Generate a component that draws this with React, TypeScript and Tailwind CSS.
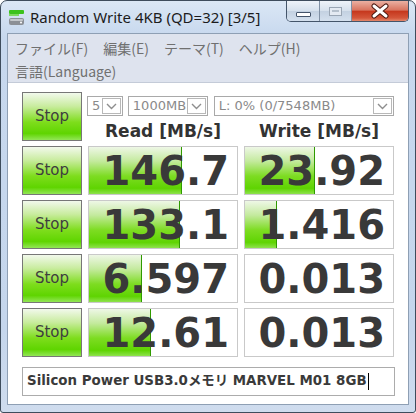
const rows = [
  { read: "146.7", rb: 94, write: "23.92", wb: 71 },
  { read: "133.1", rb: 92, write: "1.416", wb: 33 },
  { read: "6.597", rb: 54, write: "0.013", wb: 0 },
  { read: "12.61", rb: 63, write: "0.013", wb: 0 },
];

const barBg =
  "bg-[linear-gradient(to_bottom,#eef7e6_0%,#c4ea9e_30%,#7ddc22_62%,#5fd402_88%,#8ee24c_100%)]";

function Chevron() {
  return (
    <svg width="11" height="7" viewBox="0 0 11 7">
      <path d="M1 1l4.5 4.5L10 1" fill="none" stroke="#8e8e8e" strokeWidth="1.4" />
    </svg>
  );
}

function Combo({ className, text }: { className: string; text: string }) {
  return (
    <div className={`${className} h-[20px] flex border border-[#a9a9a9] bg-white`}>
      <span className="flex-1 pl-[4px] leading-[18px] text-[13px] text-[#8a8a8a] font-['DejaVu_Sans',sans-serif] whitespace-nowrap overflow-hidden">
        {text}
      </span>
      <span className="w-[19px] m-px flex items-center justify-center border border-[#b8b8b8]">
        <Chevron />
      </span>
    </div>
  );
}

function StopButton() {
  return (
    <button className="w-[60px] h-[49px] flex items-center justify-center border border-[#777] bg-[linear-gradient(to_bottom,#f2f9ec_0%,#c9ec9f_28%,#7edd1c_62%,#5fd500_86%,#92e656_100%)] text-[15px] text-[#3e3e3e] font-['DejaVu_Sans',sans-serif]">
      Stop
    </button>
  );
}

function Cell({ value, bar }: { value: string; bar: number }) {
  return (
    <div className="relative w-[150px] h-[49px] border border-[#c9c9c9] bg-white flex items-center justify-end pr-[8px]">
      {bar > 0 && (
        <div
          className={`absolute left-0 top-0 bottom-0 border-r border-[#2f9a00] ${barBg}`}
          style={{ width: bar - 1 }}
        />
      )}
      <span className="relative text-[40px] leading-none font-bold text-[#393939] font-['DejaVu_Sans',sans-serif]">
        {value}
      </span>
    </div>
  );
}

function WindowButtons() {
  return (
    <div className="self-start mr-[6px] flex h-[21px] border border-t-0 border-[#44556a] rounded-b-[5px] overflow-hidden">
      <div className="w-[33px] flex items-center justify-center border-r border-[#8090a4] bg-[linear-gradient(to_bottom,#eef3f9,#d5e0ec_50%,#c3d1e1_51%,#d4e0ee)]">
        <div className="mt-[6px] w-[15px] h-[5px] bg-white border border-[#44546a] rounded-[1px]" />
      </div>
      <div className="w-[32px] flex items-center justify-center border-r border-[#8090a4] bg-[linear-gradient(to_bottom,#eef3f9,#d5e0ec_50%,#c3d1e1_51%,#d4e0ee)]">
        <div className="w-[13px] h-[9px] border border-[#9aa6b4] bg-[#e4eaf2] flex items-start justify-center pt-[2px]">
          <div className="w-[7px] h-[2px] bg-[#b5c0cc]" />
        </div>
      </div>
      <div className="w-[56px] flex items-center justify-center bg-[linear-gradient(to_bottom,#eab0a2,#d87560_45%,#c6381e_52%,#d4563a_85%,#e3886c)]">
        <svg width="20" height="16" viewBox="0 0 20 16">
          <path d="M4 3l12 10M16 3L4 13" stroke="#4a1810" strokeWidth="5" strokeLinecap="round" />
          <path d="M4 3l12 10M16 3L4 13" stroke="#ffffff" strokeWidth="3" strokeLinecap="round" />
        </svg>
      </div>
    </div>
  );
}

function AppIcon() {
  return (
    <svg width="17" height="17" viewBox="0 0 17 17">
      <rect x="1" y="1" width="15" height="4" rx="1" fill="#3cc21c" />
      <rect x="1" y="5" width="10" height="2" fill="#7fd860" />
      <rect x="1" y="9" width="15" height="7" rx="2" fill="#8c9096" />
      <rect x="2" y="10" width="13" height="2" rx="1" fill="#c4c8cc" />
      <circle cx="13" cy="13.5" r="1" fill="#ffffff" />
    </svg>
  );
}

export default function App() {
  return (
    <div className="w-[416px] h-[413px] flex flex-col border border-[#3e4c5c] rounded-t-[7px] rounded-b-[3px] overflow-hidden bg-[linear-gradient(to_bottom,#dbe7f5,#c7d8ee_36px,#c5d6ec_80%,#cfdcee)]">
      <div className="h-[32px] flex shrink-0">
        <div className="flex items-center pl-[7px] gap-[5px]">
          <AppIcon />
          <span className="text-[15px] text-[#1c1c1c] font-['Noto_Sans',sans-serif] whitespace-nowrap">
            Random Write 4KB (QD=32) [3/5]
          </span>
        </div>
        <div className="ml-auto" />
        <WindowButtons />
      </div>

      <div className="mx-[6px] mb-[7px] flex-1 flex flex-col border border-[#8e9fb4] bg-white">
        <div className="h-[49px] pt-[2px] bg-[#dee3ee] border-b border-[#c4cbd8] text-[14px] text-[#707070] font-['Noto_Sans_CJK_JP',sans-serif]">
          <div className="h-[24px] flex items-center">
            <span className="px-[7px]">ファイル(F)</span>
            <span className="px-[7px] ml-px">編集(E)</span>
            <span className="px-[7px] ml-px">テーマ(T)</span>
            <span className="px-[7px] ml-px">ヘルプ(H)</span>
          </div>
          <div className="h-[23px] flex items-center">
            <span className="px-[7px]">言語(Language)</span>
          </div>
        </div>

        <div className="flex-1 pt-[9px] pl-[14px] flex flex-col">
          <div className="grid grid-cols-[60px_150px_150px] gap-x-[6px] gap-y-[5px]">
            <StopButton />
            <div className="col-span-2 h-[49px] flex flex-col">
              <div className="flex gap-[5px] mt-[4px] -ml-px">
                <Combo className="w-[36px]" text="5" />
                <Combo className="w-[80px]" text="1000MB" />
                <Combo className="w-[181px] ml-px" text="L: 0% (0/7548MB)" />
              </div>
              <div className="flex-1 pt-[3px] grid grid-cols-[150px_150px] gap-x-[6px] items-center text-[17px] font-bold text-[#333] font-['DejaVu_Sans',sans-serif] text-center">
                <span>Read [MB/s]</span>
                <span>Write [MB/s]</span>
              </div>
            </div>
            {rows.map((r, i) => (
              <div key={i} className="contents">
                <StopButton />
                <Cell value={r.read} bar={r.rb} />
                <Cell value={r.write} bar={r.wb} />
              </div>
            ))}
          </div>
          <div className="mt-[10px] w-[373px] h-[29px] border border-[#acacac] flex items-center pl-[4px] text-[13.4px] font-bold text-[#3a3a3a] font-['DejaVu_Sans','Noto_Sans_CJK_JP',sans-serif] whitespace-nowrap">
            Silicon Power USB3.0メモリ MARVEL M01 8GB
            <span className="ml-px w-px h-[17px] bg-black" />
          </div>
        </div>
      </div>
    </div>
  );
}
